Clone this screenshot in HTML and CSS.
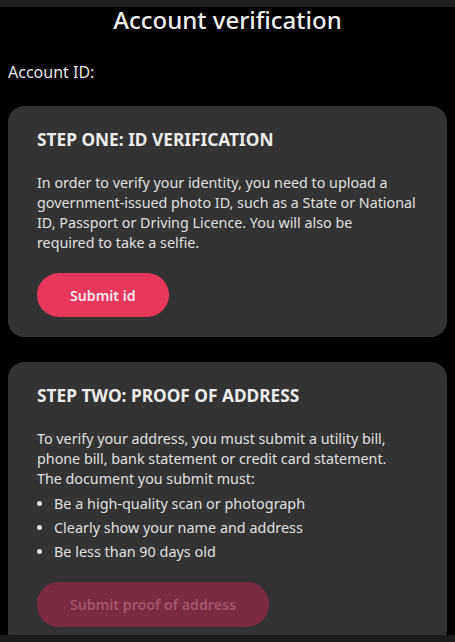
FILE: index.html
```html
<!DOCTYPE html>
<html lang="en">
<head>
<meta charset="utf-8">
<title>Account verification</title>
<link rel="stylesheet" href="styles.css">
</head>
<body>
<div class="screen">
  <div class="status-strip"></div>
  <main class="content">
    <h1 class="page-title">Account verification</h1>
    <p class="account-id">Account ID:</p>

    <section class="card">
      <h2 class="card-title">STEP ONE: ID VERIFICATION</h2>
      <p class="card-text">In order to verify your identity, you need to upload a<br>government-issued photo ID, such as a State or National<br>ID, Passport or Driving Licence. You will also be<br>required to take a selfie.</p>
      <button class="btn">Submit id</button>
    </section>

    <section class="card">
      <h2 class="card-title">STEP TWO: PROOF OF ADDRESS</h2>
      <p class="card-text">To verify your address, you must submit a utility bill,<br>phone bill, bank statement or credit card statement.<br>The document you submit must:</p>
      <ul class="req-list">
        <li>Be a high-quality scan or photograph</li>
        <li>Clearly show your name and address</li>
        <li>Be less than 90 days old</li>
      </ul>
      <button class="btn btn-disabled" disabled>Submit proof of address</button>
    </section>
  </main>
  <div class="nav-strip"></div>
</div>
</body>
</html>
```

FILE: styles.css
```css
* { box-sizing: border-box; }

html, body {
  margin: 0;
  padding: 0;
  background: #000;
}

body {
  font-family: "Noto Sans", "Open Sans", sans-serif;
  color: #e4e4e4;
}

.screen {
  height: 642px;
  display: flex;
  flex-direction: column;
  overflow: hidden;
}

.status-strip {
  height: 7px;
  flex: none;
  background: #1d1d1d;
}

.nav-strip {
  height: 7px;
  flex: none;
  background: #1b1b1b;
}

.content {
  flex: 1;
  min-height: 0;
  padding: 0 8px;
}

.page-title {
  margin: 0;
  text-align: center;
  font-size: 24px;
  line-height: 26px;
  font-weight: 500;
  color: #f0f0f0;
}

.account-id {
  margin: 28px 0 23px;
  font-size: 16px;
  line-height: 22px;
  color: #e6e6e6;
}

.card {
  background: #333333;
  border-radius: 16px;
  padding: 22px 28px 20px 29px;
  margin-bottom: 25px;
}

.card-title {
  margin: 0;
  font-size: 17.3px;
  line-height: 24px;
  font-weight: 700;
  color: #ececec;
}

.card-text {
  margin: 21px 0 0;
  font-size: 14.3px;
  line-height: 20px;
  color: #e0e0e0;
  white-space: nowrap;
}

.req-list {
  margin: 3px 0 0;
  padding: 0 0 0 17px;
  font-size: 14.4px;
  line-height: 24px;
  color: #e0e0e0;
}

.btn {
  display: block;
  margin-top: 20px;
  height: 44px;
  padding: 0 33px;
  border: none;
  border-radius: 22px;
  background: #e7375a;
  color: #fbe9ee;
  font-family: inherit;
  font-size: 14.2px;
  font-weight: 600;
}

.btn-disabled {
  margin-top: 18px;
  height: 45px;
  background: #7c2942;
  color: #a5556b;
}
```
